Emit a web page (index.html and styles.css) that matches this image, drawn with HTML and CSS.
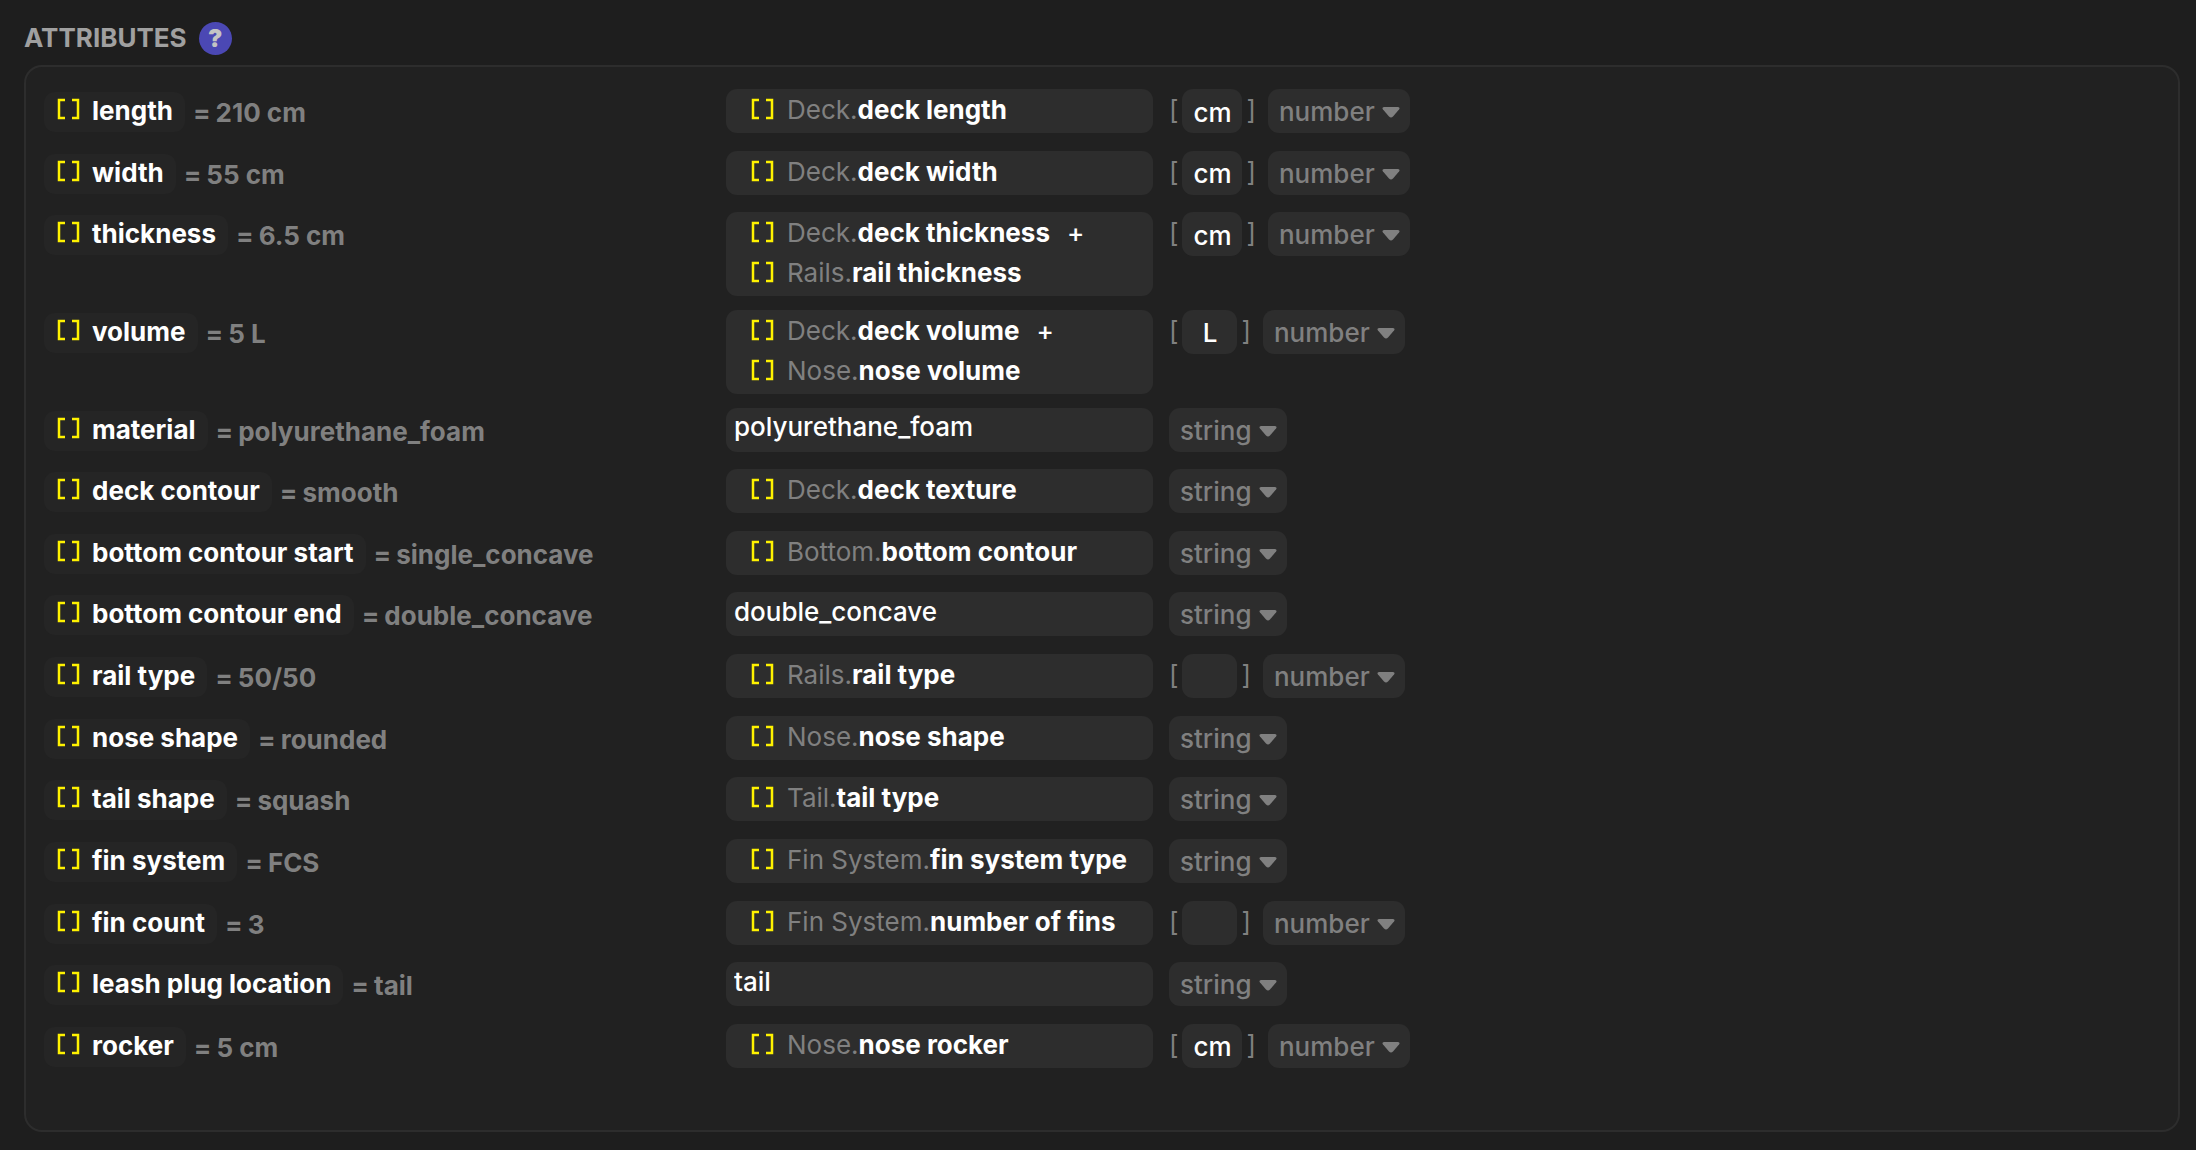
FILE: index.html
```html
<!DOCTYPE html>
<html lang="en">

<head>
  <meta charset="UTF-8">
  <meta name="viewport" content="width=device-width, initial-scale=1.0">
  <title>Attributes</title>
  <link rel="stylesheet" href="styles.css">
</head>

<body>
  <header class="section-header">
    <h2>ATTRIBUTES</h2>
    <button class="help" type="button" aria-label="Help">?</button>
  </header>
  <main class="attributes" id="attributes"></main>

  <script src="attributes.js"></script>
</body>

</html>
```
FILE: styles.css
```css
* {
  box-sizing: border-box;
}

body {
  margin: 0;
  min-height: 100vh;
  padding: 18px 16px 18px 24px;
  display: flex;
  flex-direction: column;
  background: #1e1e1e;
  color: #fff;
  font: 400 26px/40px Inter, "Liberation Sans", sans-serif;
}

button,
input,
select {
  margin: 0;
  border: 0;
  font: inherit;
  color: inherit;
}

/* header */
.section-header {
  display: flex;
  align-items: center;
  gap: 12px;
  height: 40px;
  margin-bottom: 7px;
}

.section-header h2 {
  margin: 0;
  font-size: 26px;
  font-weight: 700;
  color: #a0a0a0;
}

.help {
  width: 33px;
  height: 33px;
  padding: 0;
  border-radius: 50%;
  background: #4b48b4;
  color: #c4c4c4;
  font-size: 24px;
  font-weight: 900;
  line-height: 33px;
  text-align: center;
}

/* list */
.attributes {
  flex: 1;
  display: flex;
  flex-direction: column;
  justify-content: space-between;
  padding: 22px 18px 58px;
  border: 2px solid #2d2d2d;
  border-radius: 18px;
  background: #212121;
}

.row {
  display: grid;
  grid-template-columns: 666fr 427fr 991fr;
  column-gap: 16px;
  align-items: start;
  min-height: 48px;
}

.name {
  display: flex;
  gap: 8px;
  padding-top: 3px;
  font-weight: 700;
}

.tag {
  display: flex;
  gap: 12px;
  height: 40px;
  padding: 0 12px;
  border-radius: 11px;
  background: #252525;
  line-height: 38px;
}

.value {
  display: flex;
  gap: 5px;
  color: #808080;
  line-height: 42px;
}

.brackets {
  flex: none;
  width: 24px;
  height: 22px;
  margin-top: 6px;
  fill: none;
  stroke: #fff200;
  stroke-width: 2.5;
}

/* expression */
.field {
  width: 100%;
  min-height: 44px;
  border-radius: 11px;
  background: #2d2d2d;
}

.refs {
  padding: 1px 16px 3px 24px;
}

.ref {
  display: flex;
  gap: 13px;
  height: 40px;
  white-space: nowrap;
}

.ref .brackets {
  margin-top: 8px;
}

.ref b {
  font-weight: 700;
}

.owner {
  color: #808080;
}

.op {
  margin-left: 4px;
  font-weight: 500;
}

input.field {
  height: 44px;
  padding: 0 8px 6px;
  font-weight: 500;
}

/* unit and type */
.type {
  display: flex;
  color: #808080;
  line-height: 42px;
}

.unit {
  display: flex;
  margin-right: 12px;
}

.unit input {
  width: 55px;
  height: 44px;
  margin: 0 4px;
  padding: 2px 8px 0;
  border-radius: 11px;
  background: #2d2d2d;
  color: #fff;
  font-weight: 500;
  text-align: center;
}

.unit input.wide {
  width: 60px;
}

.select {
  position: relative;
}

.select select {
  appearance: none;
  display: block;
  width: 142px;
  height: 44px;
  padding: 2px 11px 0;
  border-radius: 11px;
  background: #2d2d2d;
  font-weight: 500;
}

.select .string {
  width: 118px;
}

.select svg {
  position: absolute;
  top: 18px;
  right: 10px;
  width: 18px;
  height: 11px;
  fill: #808080;
  pointer-events: none;
}
```
FILE: attributes.js
```js
// expr is either a plain text or a list of [owner, attribute] references
const attributes = [
  { name: 'length', value: '210 cm', expr: [['Deck', 'deck length']], unit: 'cm', type: 'number' },
  { name: 'width', value: '55 cm', expr: [['Deck', 'deck width']], unit: 'cm', type: 'number' },
  { name: 'thickness', value: '6.5 cm', expr: [['Deck', 'deck thickness'], ['Rails', 'rail thickness']], unit: 'cm', type: 'number' },
  { name: 'volume', value: '5 L', expr: [['Deck', 'deck volume'], ['Nose', 'nose volume']], unit: 'L', type: 'number' },
  { name: 'material', value: 'polyurethane_foam', expr: 'polyurethane_foam', type: 'string' },
  { name: 'deck contour', value: 'smooth', expr: [['Deck', 'deck texture']], type: 'string' },
  { name: 'bottom contour start', value: 'single_concave', expr: [['Bottom', 'bottom contour']], type: 'string' },
  { name: 'bottom contour end', value: 'double_concave', expr: 'double_concave', type: 'string' },
  { name: 'rail type', value: '50/50', expr: [['Rails', 'rail type']], unit: '', type: 'number' },
  { name: 'nose shape', value: 'rounded', expr: [['Nose', 'nose shape']], type: 'string' },
  { name: 'tail shape', value: 'squash', expr: [['Tail', 'tail type']], type: 'string' },
  { name: 'fin system', value: 'FCS', expr: [['Fin System', 'fin system type']], type: 'string' },
  { name: 'fin count', value: '3', expr: [['Fin System', 'number of fins']], unit: '', type: 'number' },
  { name: 'leash plug location', value: 'tail', expr: 'tail', type: 'string' },
  { name: 'rocker', value: '5 cm', expr: [['Nose', 'nose rocker']], unit: 'cm', type: 'number' }
]

const brackets = '<svg class="brackets" viewBox="0 0 24 22"><path d="M9 2H3v18h6M16 2h6v18h-6"/></svg>'

const fieldHtml = (a, id) => {
  if (typeof a.expr === 'string') {
    return `<input class="field" id="${id}" type="text" value="${a.expr}">`
  }
  const refs = a.expr.map(([owner, attr], i) => {
    const op = i < a.expr.length - 1 ? '<span class="op">+</span>' : ''
    return `<div class="ref">${brackets}<span><span class="owner">${owner}.</span><b>${attr}</b></span>${op}</div>`
  })
  return `<div class="field refs" id="${id}">${refs.join('')}</div>`
}

const unitHtml = (a) => {
  if (a.unit === undefined) return ''
  const wide = a.unit.length > 1 ? 'class="wide"' : ''
  return `<label class="unit">[<input ${wide} type="text" value="${a.unit}" aria-label="${a.name} unit">]</label>`
}

const typeHtml = (a) => {
  const options = ['number', 'string'].map(t => `<option${t === a.type ? ' selected' : ''}>${t}</option>`)
  return `<div class="select">
    <select class="${a.type}" aria-label="${a.name} type">${options.join('')}</select>
    <svg viewBox="0 0 18 11"><path d="M2 0h14q2.500 .4 1 2.400l-6 7q-2 2-4 0l-6-7Q-.5 .4 2 0z"/></svg>
  </div>`
}

document.getElementById('attributes').innerHTML = attributes.map((a, i) => `
  <div class="row">
    <div class="name">
      <label class="tag" for="attr${i}">${brackets}${a.name}</label>
      <span class="value"><span>=</span>${a.value}</span>
    </div>
    ${fieldHtml(a, 'attr' + i)}
    <div class="type">${unitHtml(a)}${typeHtml(a)}</div>
  </div>`).join('')
```
